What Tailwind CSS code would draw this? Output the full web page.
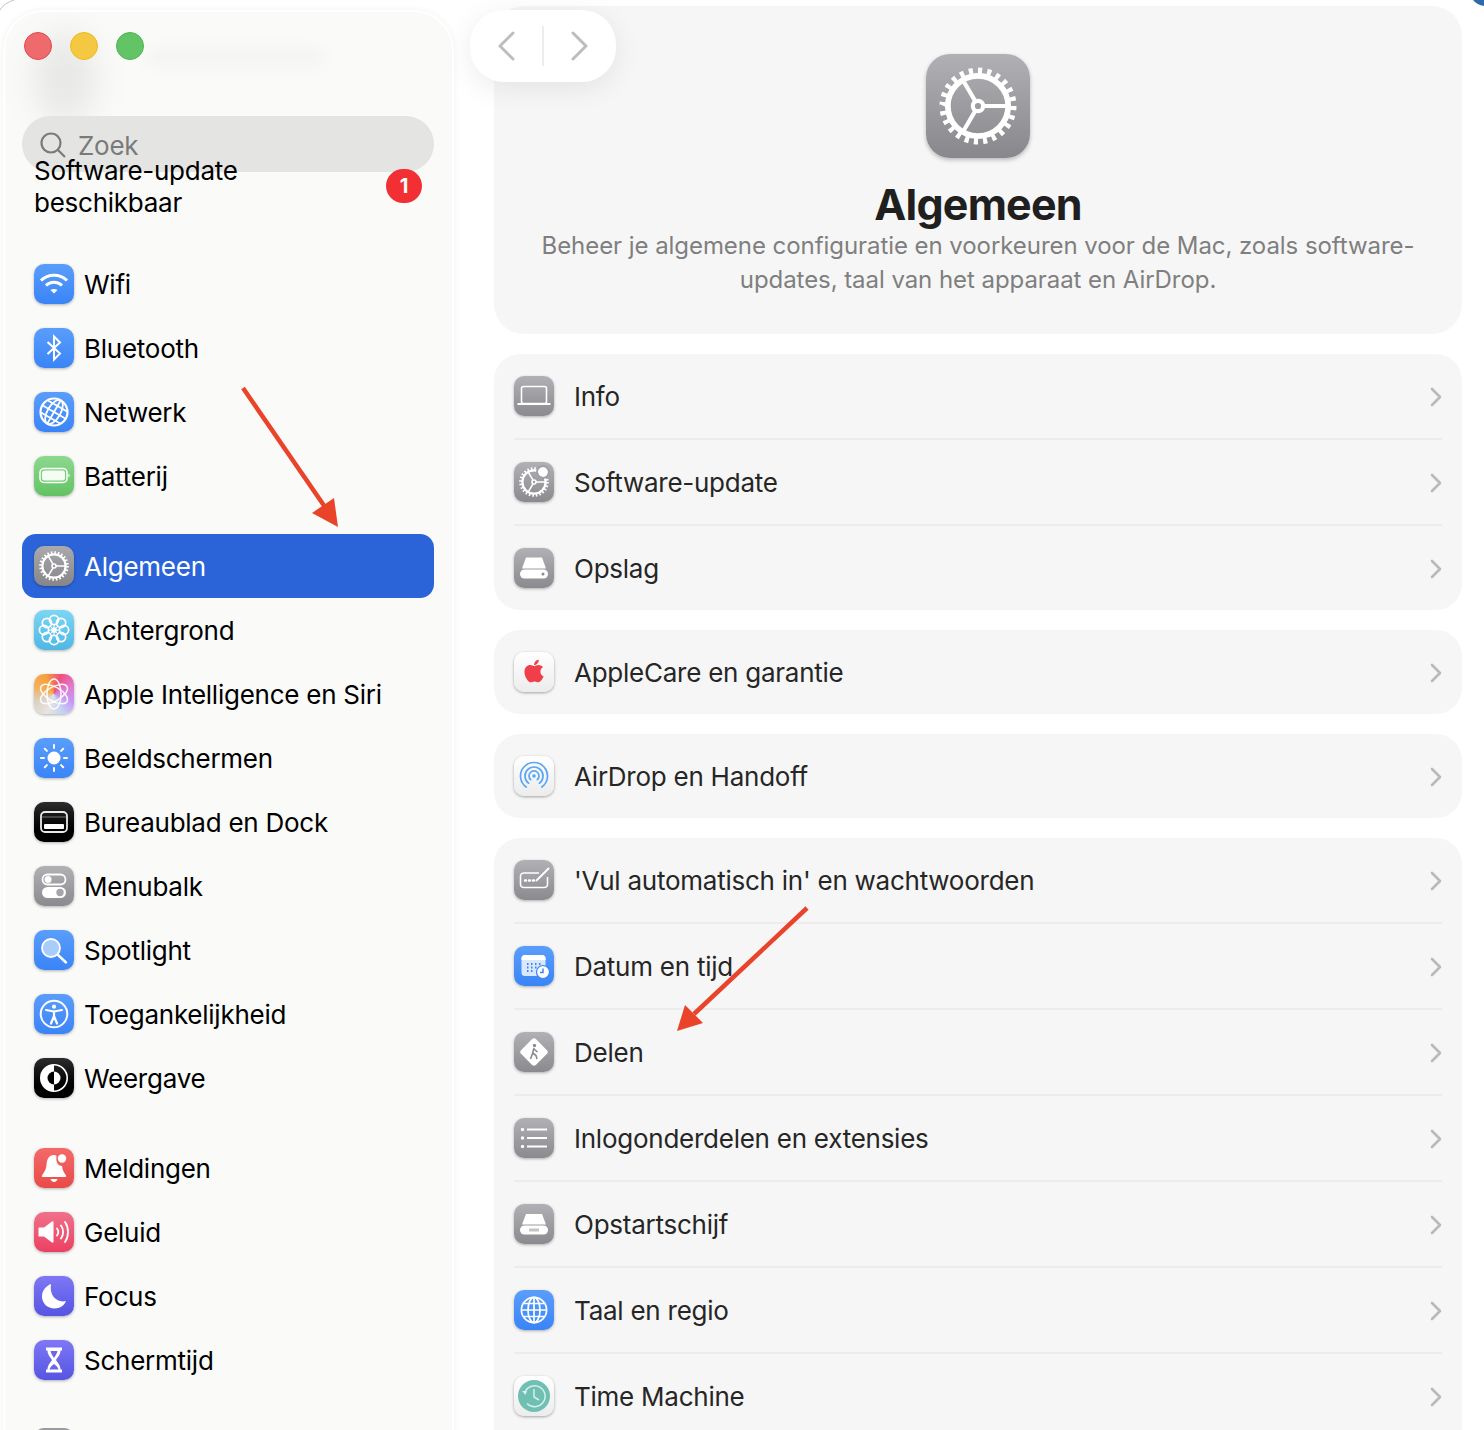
<!DOCTYPE html>
<html lang="nl">
<head>
  <meta charset="UTF-8" />
  <meta name="viewport" content="width=device-width, initial-scale=1.0" />
  <title>Algemeen</title>
  <script src="https://cdn.jsdelivr.net/npm/@tailwindcss/browser@4"></script>
</head>
<body class="bg-white text-black font-['Inter','Liberation_Sans',sans-serif] overflow-hidden">
  <svg width="0" height="0" class="absolute">
    <defs>
      <symbol id="gear" viewBox="0 0 100 100">
        <circle cx="50" cy="50" r="33" fill="none" stroke="white" stroke-width="8" stroke-dasharray="0.9 1.1" pathLength="48" />
        <circle cx="50" cy="50" r="29" fill="none" stroke="white" stroke-width="5.5" />
        <circle cx="50" cy="50" r="5" fill="none" stroke="white" stroke-width="4" />
        <path d="M55 50H79M47.5 45.5L36 26M47.5 54.5L36 74" fill="none" stroke="white" stroke-width="4" />
      </symbol>
      <symbol id="globe" viewBox="0 0 40 40">
        <g fill="none" stroke="white" stroke-width="1.7">
          <circle cx="20" cy="20" r="12.6" />
          <ellipse cx="20" cy="20" rx="6" ry="12.6" />
          <path d="M20 7.4V32.6M7.4 20H32.6M9.5 13.5H30.5M9.5 26.5H30.5" />
        </g>
      </symbol>
      <symbol id="chevron" viewBox="0 0 12 20">
        <path d="M2 2L10 10L2 18" fill="none" stroke="#b9b9b9" stroke-width="2.6" stroke-linecap="round" stroke-linejoin="round" />
      </symbol>
    </defs>
  </svg>

  <div class="relative h-[1430px] w-[1484px] overflow-hidden flex items-start">
    <!-- Zijbalk -->
    <aside class="relative ml-[3px] mt-[10px] w-[451px] h-[1440px] rounded-t-[40px] bg-[#fafaf9] border-2 border-white shadow-[0_0_6px_rgba(0,0,0,0.06)] text-[26px] tracking-[-0.25px] overflow-hidden">
      <div class="absolute left-[30px] top-[20px] w-[60px] h-[90px] rounded-full bg-black/7 blur-[16px]"></div>
      <div class="absolute left-[140px] top-[38px] w-[180px] h-[14px] rounded-full bg-black/3 blur-[8px]"></div>

      <div class="relative flex gap-[18px] pl-[19px] pt-[20px]">
        <span class="w-[28px] h-[28px] rounded-full bg-[#ef6a6c] border border-[#e5484b]"></span>
        <span class="w-[28px] h-[28px] rounded-full bg-[#f5c842] border border-[#eeb91f]"></span>
        <span class="w-[28px] h-[28px] rounded-full bg-[#62c465] border border-[#4cb551]"></span>
      </div>

      <div class="relative mt-[56px] ml-[17px] mr-[18px] h-[56px] rounded-[28px] bg-[#e4e4e3] flex items-center pl-[18px] gap-[12px] text-[#7a7a7a]">
        <svg class="w-[26px] h-[26px] mt-[2px]" viewBox="0 0 26 26" fill="none" stroke="#7a7a7a" stroke-width="2.2"><circle cx="11" cy="11" r="9.5" /><path d="M18 18L25 25" /></svg>
        <span class="mt-[2px]">Zoek</span>
      </div>

      <div class="relative -mt-[17px] pl-[29px] pr-[30px] flex items-center justify-between leading-[32px]">
        <span>Software-update<br />beschikbaar</span>
        <span class="mt-[-2px] w-[36px] h-[34px] rounded-full bg-[#f22f33] text-white text-[20px] font-bold flex items-center justify-center">1</span>
      </div>

      <nav class="relative mt-[33px] ml-[17px] mr-[18px]">
        <div class="flex flex-col">
          <a class="h-[64px] pl-[12px] flex items-center gap-[10px]">
            <span class="w-10 h-10 rounded-[10px] bg-linear-to-b from-[#5a9dfb] to-[#3a84f7] shadow-[0_1px_3px_rgba(0,0,0,0.3)]">
              <svg class="w-10 h-10" viewBox="0 0 40 40" fill="none" stroke="white" stroke-width="3"><path d="M7 16.5C14 9.5 26 9.5 33 16.5" /><path d="M12 21.5C16.5 17.3 23.5 17.3 28 21.5" /><path d="M16.5 26C18.5 24.6 21.5 24.6 23.5 26L20 29.5Z" fill="white" stroke="none" /></svg>
            </span>
            <span>Wifi</span>
          </a>
          <a class="h-[64px] pl-[12px] flex items-center gap-[10px]">
            <span class="w-10 h-10 rounded-[10px] bg-linear-to-b from-[#5a9dfb] to-[#3a84f7] shadow-[0_1px_3px_rgba(0,0,0,0.3)]">
              <svg class="w-10 h-10" viewBox="0 0 40 40" fill="none" stroke="white" stroke-width="2"><path d="M13.5 14L26 25.5L20 31.5V8.5L26 14.5L13.5 26" /></svg>
            </span>
            <span>Bluetooth</span>
          </a>
          <a class="h-[64px] pl-[12px] flex items-center gap-[10px]">
            <span class="w-10 h-10 rounded-[10px] bg-linear-to-b from-[#5a9dfb] to-[#3a84f7] shadow-[0_1px_3px_rgba(0,0,0,0.3)]">
              <svg class="w-10 h-10" viewBox="0 0 40 40" fill="none" stroke="white" stroke-width="1.8"><circle cx="20" cy="20" r="13.5" stroke-width="2.2" /><g transform="rotate(30 20 20)"><ellipse cx="20" cy="20" rx="6.5" ry="13.5" /><path d="M20 6.5V33.5M6.5 20H33.5M9 13H31M9 27H31" /></g></svg>
            </span>
            <span>Netwerk</span>
          </a>
          <a class="h-[64px] pl-[12px] flex items-center gap-[10px]">
            <span class="w-10 h-10 rounded-[10px] bg-linear-to-b from-[#8dd88f] to-[#62c263] shadow-[0_1px_3px_rgba(0,0,0,0.3)]">
              <svg class="w-10 h-10" viewBox="0 0 40 40"><rect x="6" y="12.5" width="27" height="14" rx="4" fill="none" stroke="white" stroke-width="1.5" /><rect x="8" y="14.5" width="23" height="10" rx="2.5" fill="#f3fdf1" /><path d="M34.5 17.5C36 18 36 21 34.5 21.5Z" fill="white" /></svg>
            </span>
            <span>Batterij</span>
          </a>
        </div>

        <div class="flex flex-col mt-[26px]">
          <a class="h-[64px] pl-[12px] flex items-center gap-[10px] rounded-[14px] bg-[#2b64d9] text-white">
            <span class="w-10 h-10 rounded-[10px] bg-linear-to-b from-[#a9a9ae] to-[#85858a] shadow-[0_1px_3px_rgba(0,0,0,0.3)] flex items-center justify-center">
              <svg class="w-10 h-10"><use href="#gear" /></svg>
            </span>
            <span>Algemeen</span>
          </a>
          <a class="h-[64px] pl-[12px] flex items-center gap-[10px]">
            <span class="w-10 h-10 rounded-[10px] bg-linear-to-b from-[#7bd6f2] to-[#4fb7e4] shadow-[0_1px_3px_rgba(0,0,0,0.3)]">
              <svg class="w-10 h-10" viewBox="0 0 40 40" fill="none" stroke="white" stroke-width="1.7">
                <circle cx="20" cy="10" r="4.6" /><circle cx="27.07" cy="12.93" r="4.6" /><circle cx="30" cy="20" r="4.6" /><circle cx="27.07" cy="27.07" r="4.6" /><circle cx="20" cy="30" r="4.6" /><circle cx="12.93" cy="27.07" r="4.6" /><circle cx="10" cy="20" r="4.6" /><circle cx="12.93" cy="12.93" r="4.6" /><circle cx="20" cy="20" r="2" fill="white" /><path d="M20 14V26M14 20H26M15.8 15.8L24.2 24.2M15.8 24.2L24.2 15.8" stroke-width="1" />
              </svg>
            </span>
            <span>Achtergrond</span>
          </a>
          <a class="h-[64px] pl-[12px] flex items-center gap-[10px]">
            <span class="w-10 h-10 rounded-[10px] bg-[conic-gradient(from_20deg,#ee4f7d,#e27ad0,#c995f3,#c4d3f4,#e9e4df,#d9d2c6,#f5b05e,#f6a13b,#ee4f7d)] shadow-[0_1px_3px_rgba(0,0,0,0.3)]">
              <svg class="w-10 h-10" viewBox="0 0 40 40" fill="none" stroke="white" stroke-width="1.5" stroke-opacity="0.9">
                <ellipse cx="20" cy="20" rx="7" ry="15" /><ellipse cx="20" cy="20" rx="7" ry="15" transform="rotate(60 20 20)" /><ellipse cx="20" cy="20" rx="7" ry="15" transform="rotate(120 20 20)" />
              </svg>
            </span>
            <span>Apple Intelligence en Siri</span>
          </a>
          <a class="h-[64px] pl-[12px] flex items-center gap-[10px]">
            <span class="w-10 h-10 rounded-[10px] bg-linear-to-b from-[#5a9dfb] to-[#3a84f7] shadow-[0_1px_3px_rgba(0,0,0,0.3)]">
              <svg class="w-10 h-10" viewBox="0 0 40 40" fill="none" stroke="white" stroke-width="2" stroke-linecap="round"><circle cx="20" cy="20" r="6.5" fill="white" stroke="none" /><path d="M20 7V10M20 30V33M7 20H10M30 20H33M10.8 10.8L12.9 12.9M27.1 27.1L29.2 29.2M10.8 29.2L12.9 27.1M27.1 12.9L29.2 10.8" /></svg>
            </span>
            <span>Beeldschermen</span>
          </a>
          <a class="h-[64px] pl-[12px] flex items-center gap-[10px]">
            <span class="w-10 h-10 rounded-[10px] bg-linear-to-b from-[#2c2c2e] to-black shadow-[0_1px_3px_rgba(0,0,0,0.3)]">
              <svg class="w-10 h-10" viewBox="0 0 40 40"><rect x="7" y="10" width="26" height="20" rx="4" fill="none" stroke="#e8e8e8" stroke-width="1.8" /><rect x="10" y="22" width="20" height="5" rx="1" fill="white" /><path d="M8 15H32" stroke="#555" stroke-width="1.5" /></svg>
            </span>
            <span>Bureaublad en Dock</span>
          </a>
          <a class="h-[64px] pl-[12px] flex items-center gap-[10px]">
            <span class="w-10 h-10 rounded-[10px] bg-linear-to-b from-[#b0b0b5] to-[#8a8a8f] shadow-[0_1px_3px_rgba(0,0,0,0.3)]">
              <svg class="w-10 h-10" viewBox="0 0 40 40"><rect x="8.5" y="8.5" width="23" height="10" rx="5" fill="none" stroke="white" stroke-width="1.8" /><circle cx="14" cy="13.5" r="3.5" fill="white" /><rect x="8" y="21" width="24" height="11" rx="5.5" fill="white" /><circle cx="26" cy="26.5" r="3.7" fill="#a5a5aa" /></svg>
            </span>
            <span>Menubalk</span>
          </a>
          <a class="h-[64px] pl-[12px] flex items-center gap-[10px]">
            <span class="w-10 h-10 rounded-[10px] bg-linear-to-b from-[#5a9dfb] to-[#3a84f7] shadow-[0_1px_3px_rgba(0,0,0,0.3)]">
              <svg class="w-10 h-10" viewBox="0 0 40 40"><circle cx="17" cy="18" r="9" fill="#a9cdfb" stroke="white" stroke-width="1.8" /><path d="M24 25L32 32.5" stroke="white" stroke-width="2.4" stroke-linecap="round" /></svg>
            </span>
            <span>Spotlight</span>
          </a>
          <a class="h-[64px] pl-[12px] flex items-center gap-[10px]">
            <span class="w-10 h-10 rounded-[10px] bg-linear-to-b from-[#5a9dfb] to-[#3a84f7] shadow-[0_1px_3px_rgba(0,0,0,0.3)]">
              <svg class="w-10 h-10" viewBox="0 0 40 40" fill="none" stroke="white"><circle cx="20" cy="20" r="13.3" stroke-width="2" /><circle cx="20" cy="12.7" r="2.1" fill="white" stroke="none" /><path d="M12 16L20 17.5L28 16" stroke-width="2" stroke-linecap="round" /><path d="M20 17.5V22M20 22L17 29.5M20 22L23 29.5" stroke-width="2.2" stroke-linecap="round" /></svg>
            </span>
            <span>Toegankelijkheid</span>
          </a>
          <a class="h-[64px] pl-[12px] flex items-center gap-[10px]">
            <span class="w-10 h-10 rounded-[10px] bg-linear-to-b from-[#2c2c2e] to-black shadow-[0_1px_3px_rgba(0,0,0,0.3)]">
              <svg class="w-10 h-10" viewBox="0 0 40 40"><circle cx="20" cy="20" r="13.2" fill="none" stroke="white" stroke-width="1.6" /><path d="M20 6.8A13.2 13.2 0 0 0 20 33.2Z" fill="white" /><path d="M20 13.5A6.5 6.5 0 0 0 20 26.5Z" fill="black" /><path d="M20 13.5A6.5 6.5 0 0 1 20 26.5Z" fill="white" /></svg>
            </span>
            <span>Weergave</span>
          </a>
        </div>

        <div class="flex flex-col mt-[26px]">
          <a class="h-[64px] pl-[12px] flex items-center gap-[10px]">
            <span class="w-10 h-10 rounded-[10px] bg-linear-to-b from-[#f4696a] to-[#e84a48] shadow-[0_1px_3px_rgba(0,0,0,0.3)]">
              <svg class="w-10 h-10" viewBox="0 0 40 40" fill="white"><path d="M20 7C15 7 13 11 12.6 16C12.2 21 11 23 8 27.5C7.6 28.3 8 29 9 29H31C32 29 32.4 28.3 32 27.5C29.5 24 28.3 21.5 28 18C24 18 21.5 14 22.5 8C21.8 7.3 21 7 20 7Z" /><circle cx="28" cy="10.5" r="4.2" /><path d="M16.5 31H23.5C23 33 21.5 34 20 34C18.5 34 17 33 16.5 31Z" /></svg>
            </span>
            <span>Meldingen</span>
          </a>
          <a class="h-[64px] pl-[12px] flex items-center gap-[10px]">
            <span class="w-10 h-10 rounded-[10px] bg-linear-to-b from-[#f0708a] to-[#eb3f62] shadow-[0_1px_3px_rgba(0,0,0,0.3)]">
              <svg class="w-10 h-10" viewBox="0 0 40 40" fill="none" stroke="white" stroke-width="1.8" stroke-linecap="round"><path d="M5 15.5H10L18 9.5C18.7 9 19.5 9.5 19.5 10.5V29.5C19.5 30.5 18.7 31 18 30.5L10 24.5H5C4.5 24.5 4.5 24 4.5 23.5V16.5C4.5 16 4.5 15.5 5 15.5Z" fill="white" stroke="none" /><path d="M23 16.5C24.5 18.5 24.5 21.5 23 23.5" /><path d="M27 13.5C29.8 17 29.8 23 27 26.5" /><path d="M31 10C35 15.5 35 24.5 31 30" /></svg>
            </span>
            <span>Geluid</span>
          </a>
          <a class="h-[64px] pl-[12px] flex items-center gap-[10px]">
            <span class="w-10 h-10 rounded-[10px] bg-linear-to-b from-[#7f77f6] to-[#5654e2] shadow-[0_1px_3px_rgba(0,0,0,0.3)]">
              <svg class="w-10 h-10" viewBox="0 0 40 40"><path d="M17 8C12 10 8 14.5 8 20.5C8 27.5 13.5 32.5 20.5 32.5C26 32.5 30.5 29.5 32 25C24 27 15 21 17 8Z" fill="white" /></svg>
            </span>
            <span>Focus</span>
          </a>
          <a class="h-[64px] pl-[12px] flex items-center gap-[10px]">
            <span class="w-10 h-10 rounded-[10px] bg-linear-to-b from-[#7f77f6] to-[#5654e2] shadow-[0_1px_3px_rgba(0,0,0,0.3)]">
              <svg class="w-10 h-10" viewBox="0 0 40 40"><path d="M12 7.5H28V10.5H26.5C26.5 15 23.5 17.5 22 20C23.5 22.5 26.5 25 26.5 29.5H28V32.5H12V29.5H13.5C13.5 25 16.5 22.5 18 20C16.5 17.5 13.5 15 13.5 10.5H12Z" fill="white" /><path d="M16.5 11H23.5C23 14 21 16 20 18C19 16 17 14 16.5 11ZM15.5 29.5C16 27 18.5 25 20 24C21.5 25 24 27 24.5 29.5Z" fill="#6a66ec" /></svg>
            </span>
            <span>Schermtijd</span>
          </a>
        </div>

        <div class="mt-[36px] ml-[12px] w-10 h-10 rounded-[10px] bg-[#9a9a9e]"></div>
      </nav>
    </aside>

    <!-- Inhoud -->
    <main class="relative ml-[40px] mt-[6px] w-[968px] text-[26px] tracking-[-0.25px] text-[#262626]">
      <section class="h-[328px] rounded-[30px] bg-[#f6f6f6] flex flex-col items-center pt-[48px]">
        <span class="w-[104px] h-[104px] rounded-[24px] bg-linear-to-b from-[#b1b1b5] to-[#88888c] shadow-[0_2px_4px_rgba(0,0,0,0.25)] flex items-center justify-center">
          <svg class="w-[104px] h-[104px]"><use href="#gear" /></svg>
        </span>
        <h1 class="mt-[22px] mb-[1px] text-[43px] leading-[48px] font-bold tracking-[-0.8px] text-[#1f1f1f]">Algemeen</h1>
        <p class="text-center whitespace-nowrap text-[24px] tracking-[-0.06px] leading-[34px] text-[#7f7f7f]">Beheer je algemene configuratie en voorkeuren voor de Mac, zoals software-<br />updates, taal van het apparaat en AirDrop.</p>
      </section>

      <section class="mt-[20px] rounded-[26px] bg-[#f6f6f6] px-[20px]">
        <a class="h-[84px] flex items-center gap-[20px] border-b-2 border-[#ececec] box-content">
          <span class="w-10 h-10 rounded-[10px] bg-linear-to-b from-[#b0b0b5] to-[#8a8a8f] shadow-[0_1px_3px_rgba(0,0,0,0.3)]">
            <svg class="w-10 h-10" viewBox="0 0 40 40"><rect x="7.5" y="10.5" width="25" height="17" rx="2" fill="none" stroke="white" stroke-width="1.6" /><rect x="3.5" y="27" width="33" height="2" fill="white" /></svg>
          </span>
          <span class="flex-1">Info</span>
          <svg class="w-[12px] h-[20px] mt-[2px]"><use href="#chevron" /></svg>
        </a>
        <a class="h-[84px] flex items-center gap-[20px] border-b-2 border-[#ececec] box-content">
          <span class="relative w-10 h-10 rounded-[10px] bg-linear-to-b from-[#b0b0b5] to-[#8a8a8f] shadow-[0_1px_3px_rgba(0,0,0,0.3)] flex items-center justify-center">
            <svg class="w-10 h-10"><use href="#gear" /></svg>
            <span class="absolute right-[6px] top-[5px] w-[10px] h-[10px] rounded-full bg-white outline-2 outline-[#a0a0a5]"></span>
          </span>
          <span class="flex-1">Software-update</span>
          <svg class="w-[12px] h-[20px] mt-[2px]"><use href="#chevron" /></svg>
        </a>
        <a class="h-[84px] flex items-center gap-[20px]">
          <span class="w-10 h-10 rounded-[10px] bg-linear-to-b from-[#b0b0b5] to-[#8a8a8f] shadow-[0_1px_3px_rgba(0,0,0,0.3)]">
            <svg class="w-10 h-10" viewBox="0 0 40 40" fill="white"><path d="M12 9.5H28L32 20.5H8Z" /><rect x="6" y="21.5" width="28" height="9" rx="4.5" /><circle cx="29" cy="26" r="1.5" fill="#8a8a8f" /></svg>
          </span>
          <span class="flex-1">Opslag</span>
          <svg class="w-[12px] h-[20px] mt-[2px]"><use href="#chevron" /></svg>
        </a>
      </section>

      <section class="mt-[20px] rounded-[26px] bg-[#f6f6f6] px-[20px]">
        <a class="h-[84px] flex items-center gap-[20px]">
          <span class="w-10 h-10 rounded-[10px] bg-linear-to-b from-white to-[#ececec] shadow-[0_1px_3px_rgba(0,0,0,0.35)] flex items-center justify-center">
            <svg class="w-[20px] h-[26px] mb-[2px]" viewBox="0 0 384 512" fill="#ef3f4a"><path d="M318.7 268.7c-.2-36.7 16.4-64.4 50-84.8-18.8-26.9-47.2-41.7-84.7-44.6-35.5-2.8-74.3 20.7-88.5 20.7-15 0-49.4-19.7-76.4-19.7C63.3 141.2 4 184.8 4 273.5q0 39.3 14.4 81.2c12.8 36.7 59 126.7 107.2 125.2 25.2-.6 43-17.9 75.8-17.9 31.8 0 48.3 17.9 76.4 17.9 48.6-.7 90.4-82.5 102.6-119.3-65.2-30.7-61.7-90-61.7-91.9zm-56.6-164.2c27.3-32.4 24.8-61.9 24-72.5-24.1 1.4-52 16.4-67.9 34.9-17.5 19.8-27.8 44.3-25.6 71.9 26.1 2 49.9-11.4 69.5-34.3z" /></svg>
          </span>
          <span class="flex-1">AppleCare en garantie</span>
          <svg class="w-[12px] h-[20px] mt-[2px]"><use href="#chevron" /></svg>
        </a>
      </section>

      <section class="mt-[20px] rounded-[26px] bg-[#f6f6f6] px-[20px]">
        <a class="h-[84px] flex items-center gap-[20px]">
          <span class="w-10 h-10 rounded-[10px] bg-linear-to-b from-white to-[#ececec] shadow-[0_1px_3px_rgba(0,0,0,0.35)]">
            <svg class="w-10 h-10" viewBox="0 0 40 40" fill="none" stroke="#5aa5f5" stroke-width="1.7" stroke-linecap="round"><path d="M12.2 31A13.5 13.5 0 1 1 27.8 31" /><path d="M14.6 27.2A9 9 0 1 1 25.4 27.2" /><path d="M16.7 23.7A5 5 0 1 1 23.3 23.7" /><circle cx="20" cy="20" r="1.8" fill="#5aa5f5" stroke="none" /></svg>
          </span>
          <span class="flex-1">AirDrop en Handoff</span>
          <svg class="w-[12px] h-[20px] mt-[2px]"><use href="#chevron" /></svg>
        </a>
      </section>

      <section class="mt-[20px] rounded-t-[26px] bg-[#f6f6f6] px-[20px]">
        <a class="h-[84px] flex items-center gap-[20px] border-b-2 border-[#ececec] box-content">
          <span class="w-10 h-10 rounded-[10px] bg-linear-to-b from-[#b0b0b5] to-[#8a8a8f] shadow-[0_1px_3px_rgba(0,0,0,0.3)]">
            <svg class="w-10 h-10" viewBox="0 0 40 40" fill="none" stroke="white" stroke-width="1.6"><path d="M25 13H10C8 13 6.5 14.5 6.5 16V24.5C6.5 26 8 27.5 10 27.5H30C32 27.5 33.5 26 33.5 24.5V17" /><path d="M22 21L35 8" stroke-width="2" /><path d="M11 20.5H12M15 20.5H16M19 20.5H20" stroke-width="2.4" stroke-linecap="round" /></svg>
          </span>
          <span class="flex-1">'Vul automatisch in' en wachtwoorden</span>
          <svg class="w-[12px] h-[20px] mt-[2px]"><use href="#chevron" /></svg>
        </a>
        <a class="h-[84px] flex items-center gap-[20px] border-b-2 border-[#ececec] box-content">
          <span class="w-10 h-10 rounded-[10px] bg-linear-to-b from-[#5a9dfb] to-[#3a84f7] shadow-[0_1px_3px_rgba(0,0,0,0.3)]">
            <svg class="w-10 h-10" viewBox="0 0 40 40"><rect x="7.5" y="9" width="24" height="21" rx="3.5" fill="#d9e8fe" /><path d="M7.5 12.5C7.5 10.5 9 9 11 9H28C30 9 31.5 10.5 31.5 12.5V14H7.5Z" fill="white" /><path d="M13 18H14.5M17 18H18.5M21 18H22.5M25 18H26.5M13 21.5H14.5M17 21.5H18.5M21 21.5H22.5M13 25H14.5M17 25H18.5" stroke="#3a84f7" stroke-width="1.8" /><circle cx="29" cy="26" r="6.5" fill="white" stroke="#3a84f7" stroke-width="1.2" /><path d="M29 22.5V26.5H26" fill="none" stroke="#3a84f7" stroke-width="1.5" /></svg>
          </span>
          <span class="flex-1">Datum en tijd</span>
          <svg class="w-[12px] h-[20px] mt-[2px]"><use href="#chevron" /></svg>
        </a>
        <a class="h-[84px] flex items-center gap-[20px] border-b-2 border-[#ececec] box-content">
          <span class="w-10 h-10 rounded-[10px] bg-linear-to-b from-[#b0b0b5] to-[#8a8a8f] shadow-[0_1px_3px_rgba(0,0,0,0.3)]">
            <svg class="w-10 h-10" viewBox="0 0 40 40"><rect x="9.5" y="9.5" width="21" height="21" rx="3" transform="rotate(45 20 20)" fill="white" /><circle cx="20.5" cy="13.5" r="1.7" fill="#8a8a8f" /><path d="M20 16L18.5 21.5L16.5 27M18.8 21L22 23.5L23 27M20 17L23.5 20" fill="none" stroke="#8a8a8f" stroke-width="1.6" /></svg>
          </span>
          <span class="flex-1">Delen</span>
          <svg class="w-[12px] h-[20px] mt-[2px]"><use href="#chevron" /></svg>
        </a>
        <a class="h-[84px] flex items-center gap-[20px] border-b-2 border-[#ececec] box-content">
          <span class="w-10 h-10 rounded-[10px] bg-linear-to-b from-[#b0b0b5] to-[#8a8a8f] shadow-[0_1px_3px_rgba(0,0,0,0.3)]">
            <svg class="w-10 h-10" viewBox="0 0 40 40"><path d="M13 11.5H33M13 20H33M13 28.5H33" stroke="white" stroke-width="1.8" /><circle cx="8.5" cy="11.5" r="1.7" fill="white" /><circle cx="8.5" cy="20" r="1.7" fill="white" /><circle cx="8.5" cy="28.5" r="1.7" fill="white" /></svg>
          </span>
          <span class="flex-1">Inlogonderdelen en extensies</span>
          <svg class="w-[12px] h-[20px] mt-[2px]"><use href="#chevron" /></svg>
        </a>
        <a class="h-[84px] flex items-center gap-[20px] border-b-2 border-[#ececec] box-content">
          <span class="w-10 h-10 rounded-[10px] bg-linear-to-b from-[#b0b0b5] to-[#8a8a8f] shadow-[0_1px_3px_rgba(0,0,0,0.3)]">
            <svg class="w-10 h-10" viewBox="0 0 40 40" fill="white"><path d="M12 10H28L32 20.5H8Z" /><rect x="6" y="21.5" width="28" height="9" rx="4.5" /><path d="M16 24.5V27.5M18 24.5V27.5M20 24.5V27.5M22 24.5V27.5M24 24.5V27.5" stroke="#8a8a8f" stroke-width="1" /></svg>
          </span>
          <span class="flex-1">Opstartschijf</span>
          <svg class="w-[12px] h-[20px] mt-[2px]"><use href="#chevron" /></svg>
        </a>
        <a class="h-[84px] flex items-center gap-[20px] border-b-2 border-[#ececec] box-content">
          <span class="w-10 h-10 rounded-[10px] bg-linear-to-b from-[#5a9dfb] to-[#3a84f7] shadow-[0_1px_3px_rgba(0,0,0,0.3)]">
            <svg class="w-10 h-10"><use href="#globe" /></svg>
          </span>
          <span class="flex-1">Taal en regio</span>
          <svg class="w-[12px] h-[20px] mt-[2px]"><use href="#chevron" /></svg>
        </a>
        <a class="h-[84px] flex items-center gap-[20px]">
          <span class="w-10 h-10 rounded-[10px] bg-linear-to-b from-white to-[#ececec] shadow-[0_1px_3px_rgba(0,0,0,0.35)]">
            <svg class="w-10 h-10" viewBox="0 0 40 40" fill="none"><circle cx="20" cy="20" r="16" fill="#6fbfb3" /><path d="M11 16A10.5 10.5 0 1 1 13 27.5" stroke="#d7f0ec" stroke-width="1.5" /><path d="M20 13V21L25 24" stroke="#d7f0ec" stroke-width="1.5" /><path d="M8 15H13L11.5 19Z" fill="#d7f0ec" /></svg>
          </span>
          <span class="flex-1">Time Machine</span>
          <svg class="w-[12px] h-[20px] mt-[2px]"><use href="#chevron" /></svg>
        </a>
      </section>
    </main>

    <!-- Vorige / volgende, zweeft boven de inhoud -->
    <div class="absolute left-[470px] top-[10px] w-[146px] h-[72px] rounded-[34px] bg-white shadow-[0_6px_30px_rgba(0,0,0,0.08)] flex items-center justify-center gap-[27px]">
      <svg class="w-[18px] h-[30px]" viewBox="0 0 18 30" fill="none" stroke="#bdbdbd" stroke-width="3" stroke-linecap="round" stroke-linejoin="round"><path d="M16 2L3 15L16 28" /></svg>
      <span class="w-[2px] h-[40px] bg-[#ededed]"></span>
      <svg class="w-[18px] h-[30px]" viewBox="0 0 18 30" fill="none" stroke="#bdbdbd" stroke-width="3" stroke-linecap="round" stroke-linejoin="round"><path d="M2 2L15 15L2 28" /></svg>
    </div>

    <!-- Rode pijlen en schermhoeken -->
    <svg class="absolute left-0 top-0 w-[1484px] h-[1430px] pointer-events-none" viewBox="0 0 1484 1430">
      <path d="M243 388L325 507" stroke="#e9432a" stroke-width="4.5" fill="none" />
      <path d="M338 527L334 498L312 513Z" fill="#e9432a" />
      <path d="M807 908L694 1014" stroke="#e9432a" stroke-width="4.5" fill="none" />
      <path d="M677 1031L685 1005L703 1023Z" fill="#e9432a" />
      <path d="M0 10Q4 3 14 0" stroke="#c4c4c4" stroke-width="1" fill="none" />
      <path d="M1473 0Q1477 5 1484 6V0Z" fill="#2f6aa8" />
    </svg>
  </div>
</body>
</html>
